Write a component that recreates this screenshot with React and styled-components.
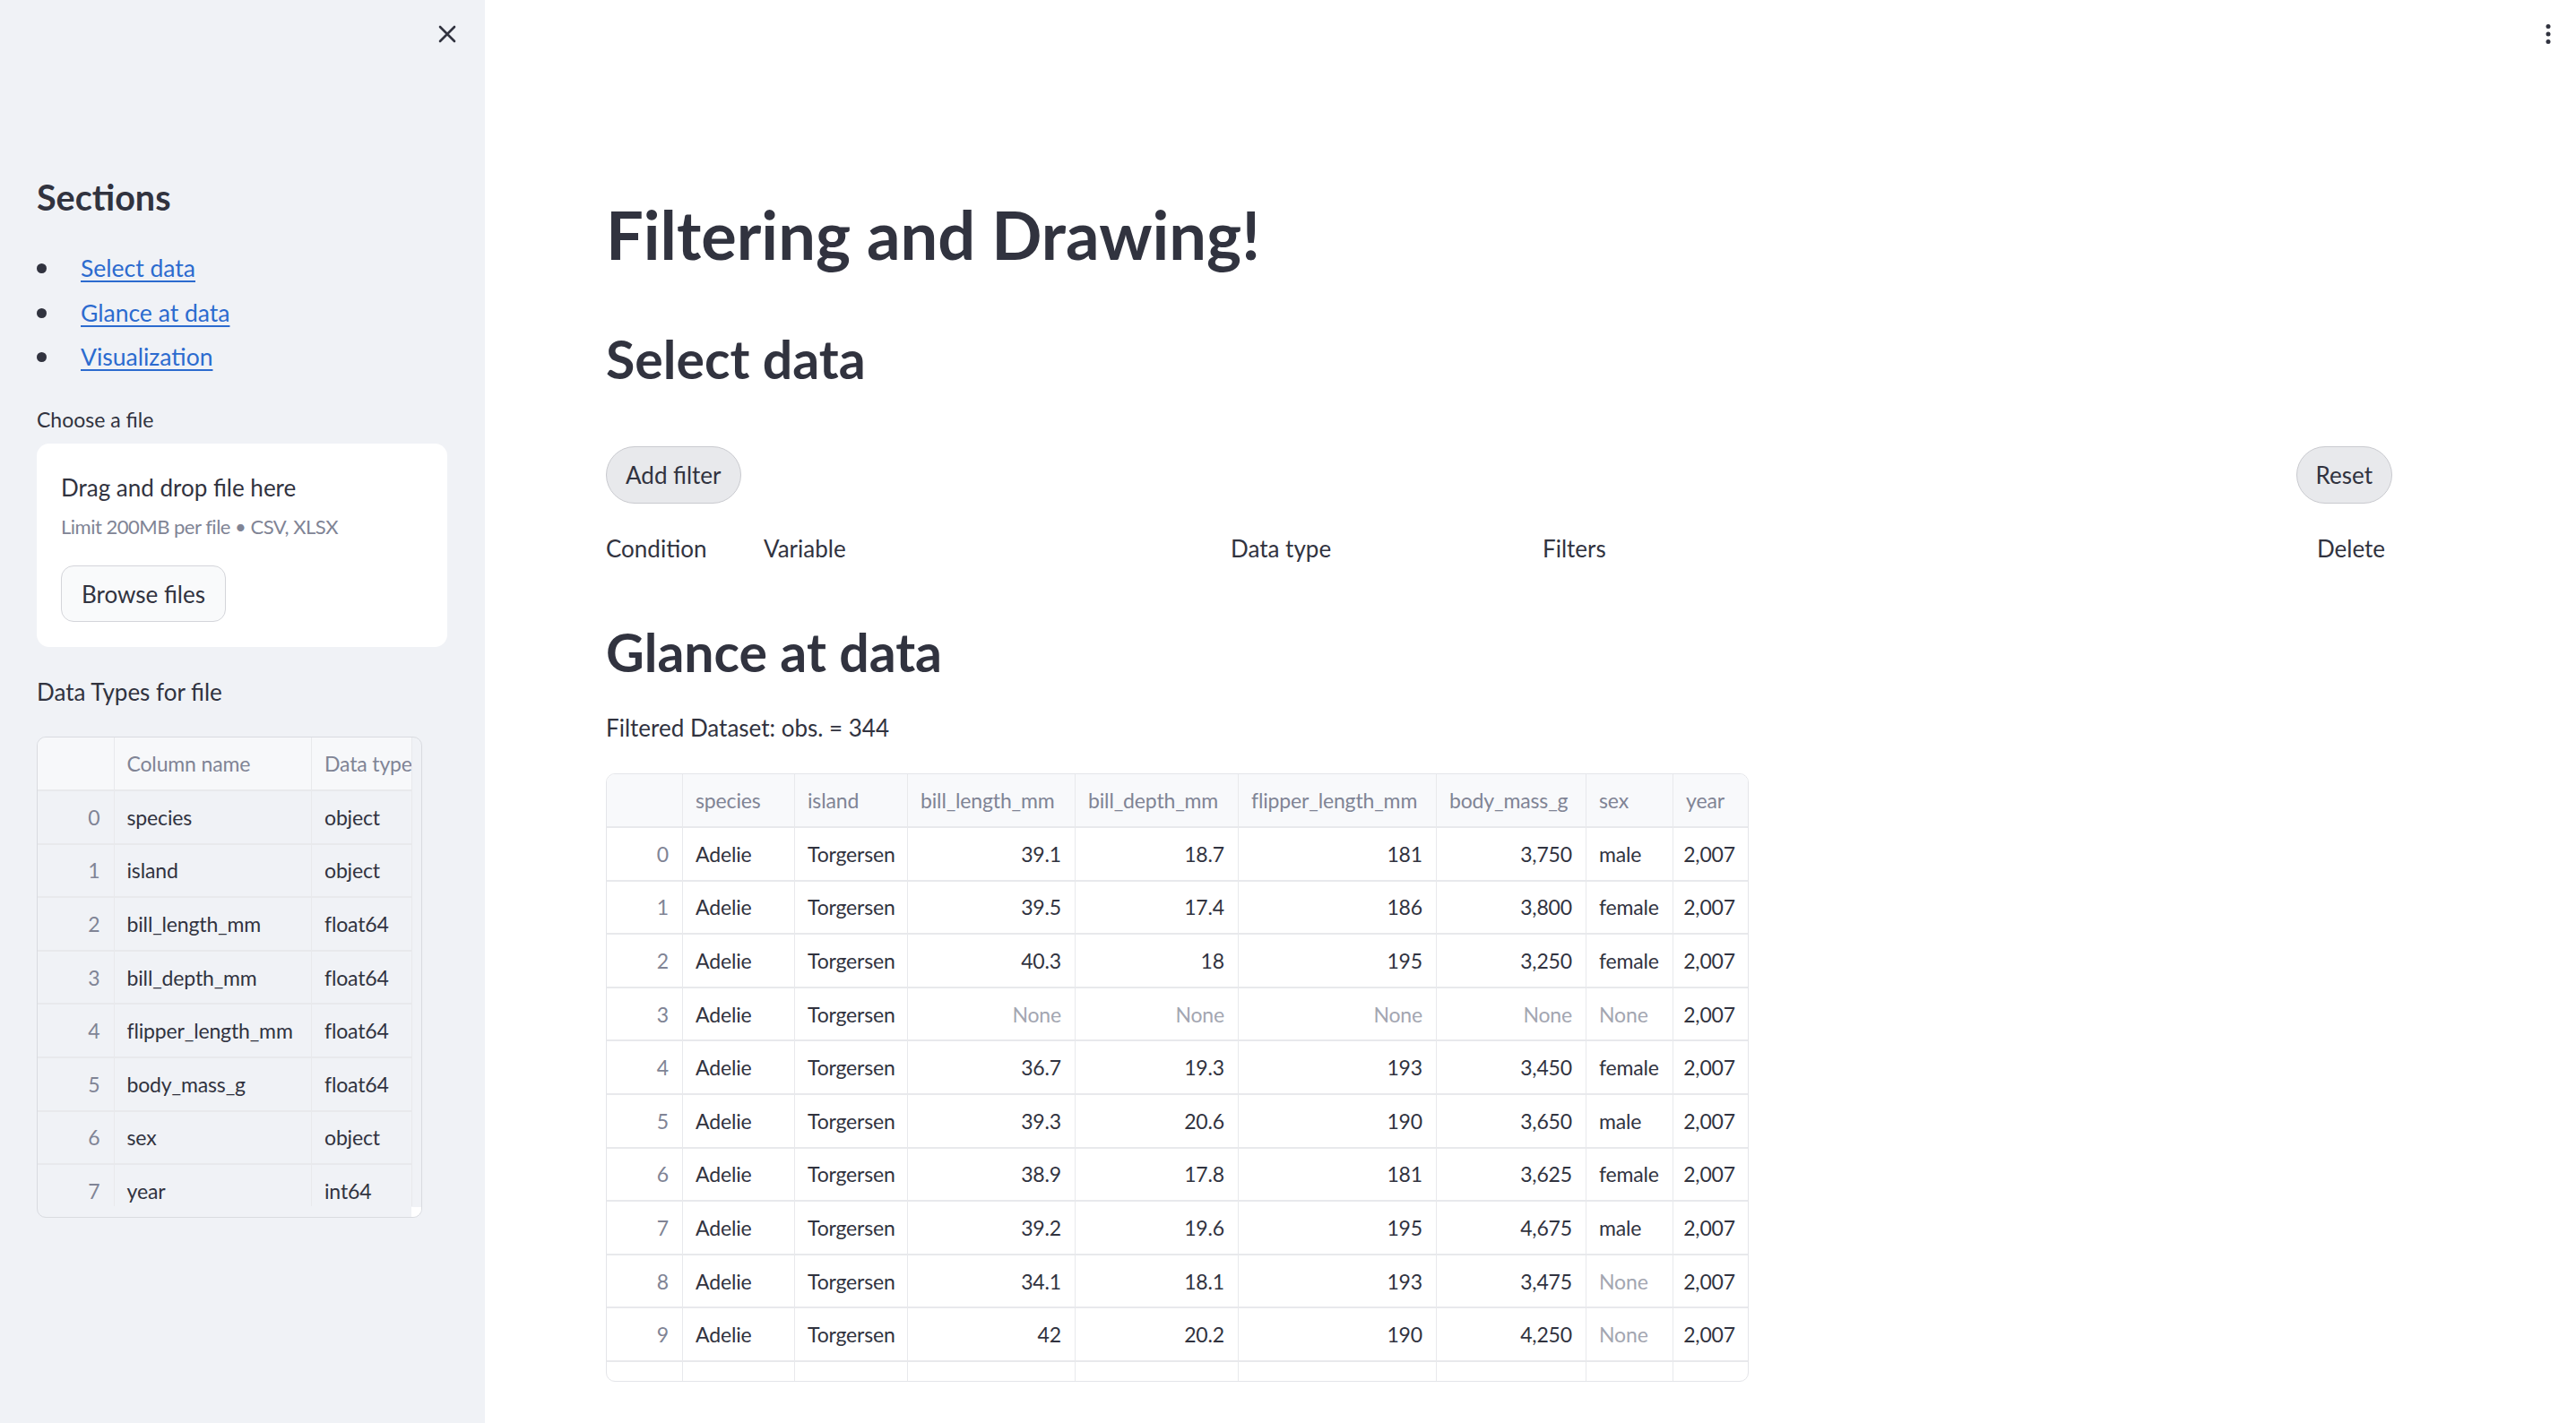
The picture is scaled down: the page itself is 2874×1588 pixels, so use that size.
import React from 'react';
import styled, { createGlobalStyle } from 'styled-components';

const textColor = '#31333f';
const mutedColor = '#808495';
const noneColor = '#a3a6b1';
const linkColor = '#2c6bcf';
const sidebarBg = '#f0f2f6';
const gridLine = '#e8e9ec';

const GlobalStyle = createGlobalStyle`
  html, body {
    margin: 0;
    padding: 0;
  }
  body {
    font-family: Lato, "Open Sans", sans-serif;
    color: ${textColor};
    background: #ffffff;
  }
  * {
    box-sizing: border-box;
  }
`;

const Page = styled.div`
  display: flex;
  width: 100%;
  height: 1588px;
  overflow: hidden;
`;

/* ---------- sidebar ---------- */

const Sidebar = styled.aside`
  flex: 0 0 541px;
  display: flex;
  flex-direction: column;
  padding: 0 42px 0 41px;
  background: ${sidebarBg};
`;

const SidebarTop = styled.div`
  display: flex;
  align-items: center;
  justify-content: flex-end;
  height: 76px;
  margin-right: -10px;
`;

const IconButton = styled.button`
  display: flex;
  align-items: center;
  justify-content: center;
  padding: 0;
  border: none;
  background: transparent;
  color: ${textColor};
`;

const SectionTitle = styled.h3`
  margin: 116px 0 0;
  font-size: 39.5px;
  font-weight: 700;
  line-height: 56px;
`;

const NavList = styled.ul`
  margin: 27px 0 0;
  padding: 0;
  list-style: none;
`;

const NavItem = styled.li`
  display: flex;
  align-items: center;
  height: 49.5px;

  &::before {
    content: '';
    flex: 0 0 11px;
    height: 11px;
    margin: 0 38px 0 0;
    border-radius: 50%;
    background: ${textColor};
  }
`;

const NavLink = styled.a`
  font-size: 26.5px;
  line-height: 49.5px;
  color: ${linkColor};
  text-decoration: underline;
  text-decoration-thickness: 2px;
  text-underline-offset: 4px;
`;

const FieldLabel = styled.div`
  margin-top: ${(p) => p.$gap}px;
  font-size: ${(p) => p.$size}px;
  line-height: ${(p) => p.$lh}px;
`;

const Dropzone = styled.div`
  display: flex;
  flex-direction: column;
  align-items: flex-start;
  height: 227px;
  margin-top: 10px;
  padding: 31px 27px 28px;
  border-radius: 14px;
  background: #ffffff;
`;

const DropTitle = styled.div`
  font-size: 26px;
  line-height: 36px;
`;

const DropHint = styled.div`
  margin-top: 10px;
  font-size: 22px;
  line-height: 32px;
  letter-spacing: -0.5px;
  color: ${mutedColor};
`;

const BrowseButton = styled.button`
  width: 184px;
  height: 63px;
  margin-top: 27px;
  border: 1.5px solid #d4d5da;
  border-radius: 14px;
  background: #f9fafb;
  font-family: inherit;
  font-size: 26px;
  color: ${textColor};
`;

const SideTableFrame = styled.div`
  position: relative;
  width: 430px;
  height: 537px;
  margin-top: 30px;
  border: 1.5px solid #d9dbe0;
  border-radius: 10px;
  overflow: hidden;
  background: ${sidebarBg};

  &::after {
    content: '';
    position: absolute;
    right: 0;
    bottom: 0;
    width: 11px;
    height: 11px;
    background: #ffffff;
  }
`;

const SideTableScroll = styled.div`
  width: 418px;
  height: 523px;
  overflow: hidden;
`;

/* ---------- shared grid table ---------- */

const GridRow = styled.div`
  display: grid;
  grid-template-columns: ${(p) => p.$cols};
  height: ${(p) => (p.$header ? 60 : 59.6)}px;
  border-bottom: 2px solid ${gridLine};
  background: ${(p) => (p.$header ? p.$headBg : 'transparent')};
`;

const GridCell = styled.div`
  display: flex;
  align-items: center;
  justify-content: ${(p) => (p.$right ? 'flex-end' : 'flex-start')};
  padding: 0 ${(p) => (p.$right ? 15 : 10)}px 0 14px;
  border-right: 1px solid ${gridLine};
  font-size: 23px;
  letter-spacing: -0.15px;
  white-space: nowrap;
  overflow: hidden;
  color: ${(p) => (p.$muted ? mutedColor : p.$none ? noneColor : textColor)};
`;

/* ---------- main ---------- */

const Main = styled.main`
  position: relative;
  flex: 1;
  padding: 212px 0 0 135px;
`;

const MenuButton = styled(IconButton)`
  position: absolute;
  top: 24px;
  right: 26px;
  width: 10px;
  height: 28px;
`;

const Content = styled.div`
  width: 1993px;
`;

const Title = styled.h1`
  margin: 0;
  font-size: 74px;
  font-weight: 700;
  line-height: 100px;
`;

const Heading = styled.h2`
  margin: ${(p) => p.$gap}px 0 0;
  font-size: 59px;
  font-weight: 700;
  line-height: 80px;
`;

const ButtonRow = styled.div`
  display: flex;
  justify-content: space-between;
  margin-top: 57px;
`;

const PillButton = styled.button`
  height: 64px;
  padding: 0 ${(p) => p.$pad}px;
  border: 1.5px solid #c9cacf;
  border-radius: 32px;
  background: #e8e9ec;
  font-family: inherit;
  font-size: 26px;
  color: ${textColor};
`;

const FilterHeader = styled.div`
  display: grid;
  grid-template-columns: 176px 521px 348px 864px 84px;
  margin-top: 30px;
  font-size: 26px;
  line-height: 40px;
`;

const Caption = styled.div`
  margin-top: 24px;
  font-size: 26px;
  line-height: 40px;
`;

const DataFrame = styled.div`
  width: 1275px;
  height: 679px;
  margin-top: 31px;
  border: 1.5px solid #e4e5e9;
  border-radius: 10px;
  overflow: hidden;
  background: #ffffff;
`;

const sideCols = '85.5px 220.5px 112px';
const sideRows = [
  ['species', 'object'],
  ['island', 'object'],
  ['bill_length_mm', 'float64'],
  ['bill_depth_mm', 'float64'],
  ['flipper_length_mm', 'float64'],
  ['body_mass_g', 'float64'],
  ['sex', 'object'],
  ['year', 'int64'],
];

const mainCols = '85px 125px 126px 187px 182px 221px 167px 97px 85px';
const columns = [
  { key: 'species' },
  { key: 'island' },
  { key: 'bill_length_mm', num: true },
  { key: 'bill_depth_mm', num: true },
  { key: 'flipper_length_mm', num: true },
  { key: 'body_mass_g', num: true },
  { key: 'sex' },
  { key: 'year', num: true },
];
const penguins = [
  ['Adelie', 'Torgersen', '39.1', '18.7', '181', '3,750', 'male', '2,007'],
  ['Adelie', 'Torgersen', '39.5', '17.4', '186', '3,800', 'female', '2,007'],
  ['Adelie', 'Torgersen', '40.3', '18', '195', '3,250', 'female', '2,007'],
  ['Adelie', 'Torgersen', null, null, null, null, null, '2,007'],
  ['Adelie', 'Torgersen', '36.7', '19.3', '193', '3,450', 'female', '2,007'],
  ['Adelie', 'Torgersen', '39.3', '20.6', '190', '3,650', 'male', '2,007'],
  ['Adelie', 'Torgersen', '38.9', '17.8', '181', '3,625', 'female', '2,007'],
  ['Adelie', 'Torgersen', '39.2', '19.6', '195', '4,675', 'male', '2,007'],
  ['Adelie', 'Torgersen', '34.1', '18.1', '193', '3,475', null, '2,007'],
  ['Adelie', 'Torgersen', '42', '20.2', '190', '4,250', null, '2,007'],
];

function CloseIcon() {
  return (
    <svg width="20" height="20" viewBox="0 0 20 20" fill="none">
      <path d="M2 2 L18 18 M18 2 L2 18" stroke="currentColor" strokeWidth="2.6" strokeLinecap="round" />
    </svg>
  );
}

function KebabIcon() {
  return (
    <svg width="6" height="24" viewBox="0 0 6 24">
      <circle cx="3" cy="3.5" r="2.5" fill="currentColor" />
      <circle cx="3" cy="12" r="2.5" fill="currentColor" />
      <circle cx="3" cy="20.5" r="2.5" fill="currentColor" />
    </svg>
  );
}

function SideTable() {
  return (
    <SideTableFrame>
      <SideTableScroll>
        <GridRow $cols={sideCols} $header $headBg="#f7f8fa">
          <GridCell />
          <GridCell $muted>Column name</GridCell>
          <GridCell $muted>Data type</GridCell>
        </GridRow>
        {sideRows.map(([name, type], i) => (
          <GridRow key={name} $cols={sideCols}>
            <GridCell $right $muted>{i}</GridCell>
            <GridCell>{name}</GridCell>
            <GridCell>{type}</GridCell>
          </GridRow>
        ))}
      </SideTableScroll>
    </SideTableFrame>
  );
}

function PenguinTable() {
  return (
    <DataFrame>
      <GridRow $cols={mainCols} $header $headBg="#f8f9fb">
        <GridCell />
        {columns.map((c) => (
          <GridCell key={c.key} $muted>{c.key}</GridCell>
        ))}
      </GridRow>
      {penguins.map((row, i) => (
        <GridRow key={i} $cols={mainCols}>
          <GridCell $right $muted>{i}</GridCell>
          {row.map((v, j) => (
            <GridCell key={j} $right={columns[j].num} $none={v === null}>
              {v === null ? 'None' : v}
            </GridCell>
          ))}
        </GridRow>
      ))}
      {/* next row, scrolled below the visible area */}
      <GridRow $cols={mainCols}>
        {Array.from({ length: 9 }, (_, j) => (
          <GridCell key={j} />
        ))}
      </GridRow>
    </DataFrame>
  );
}

export default function App() {
  return (
    <Page>
      <GlobalStyle />
      <Sidebar>
        <SidebarTop>
          <IconButton aria-label="Close sidebar">
            <CloseIcon />
          </IconButton>
        </SidebarTop>
        <SectionTitle>Sections</SectionTitle>
        <NavList>
          <NavItem><NavLink href="#select-data">Select data</NavLink></NavItem>
          <NavItem><NavLink href="#glance-at-data">Glance at data</NavLink></NavItem>
          <NavItem><NavLink href="#visualization">Visualization</NavLink></NavItem>
        </NavList>
        <FieldLabel $gap={27.5} $size={23} $lh={34}>Choose a file</FieldLabel>
        <Dropzone>
          <DropTitle>Drag and drop file here</DropTitle>
          <DropHint>Limit 200MB per file • CSV, XLSX</DropHint>
          <BrowseButton>Browse files</BrowseButton>
        </Dropzone>
        <FieldLabel $gap={30} $size={26} $lh={40}>Data Types for file</FieldLabel>
        <SideTable />
      </Sidebar>
      <Main>
        <MenuButton aria-label="Main menu">
          <KebabIcon />
        </MenuButton>
        <Content>
          <Title>Filtering and Drawing!</Title>
          <Heading id="select-data" $gap={49}>Select data</Heading>
          <ButtonRow>
            <PillButton $pad={21}>Add filter</PillButton>
            <PillButton $pad={21}>Reset</PillButton>
          </ButtonRow>
          <FilterHeader>
            <div>Condition</div>
            <div>Variable</div>
            <div>Data type</div>
            <div>Filters</div>
            <div>Delete</div>
          </FilterHeader>
          <Heading id="glance-at-data" $gap={56}>Glance at data</Heading>
          <Caption>Filtered Dataset: obs. = 344</Caption>
          <PenguinTable />
        </Content>
      </Main>
    </Page>
  );
}
